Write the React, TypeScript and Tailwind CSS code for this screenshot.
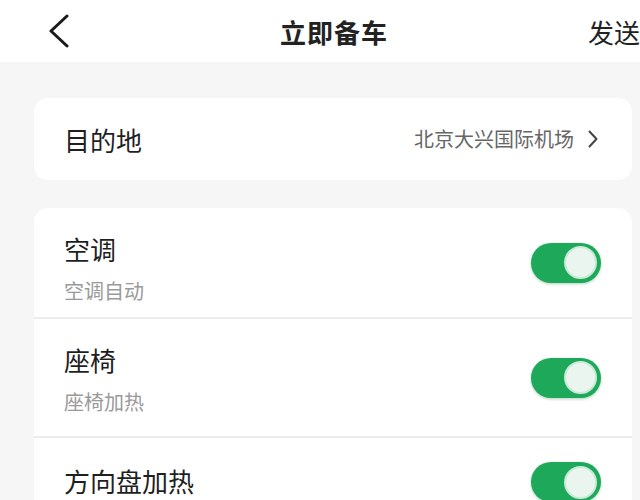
import React from 'react';

interface ToggleRowProps {
  title: string;
  subtitle?: string;
  heightClass: string;
  divider?: boolean;
}

const Toggle: React.FC = () => (
  <div className="self-center w-[70px] h-[40px] rounded-full bg-[#1ea95a] shadow-[0_1px_3px_rgba(20,120,60,0.35)] flex items-center justify-end pr-[4px]">
    <div className="w-[33px] h-[33px] rounded-full bg-[#e9f5ee] border-2 border-[#c9ead6]" />
  </div>
);

const ToggleRow: React.FC<ToggleRowProps> = ({ title, subtitle, heightClass, divider }) => (
  <div className={`${heightClass} flex items-start justify-between pl-[30px] pr-[31px] ${divider ? 'border-b-2 border-[#ececec]' : ''}`}>
    <div className={`flex flex-col ${subtitle ? 'pt-[24px]' : 'pt-[26px]'}`}>
      <span className="text-[26px] leading-[34px] text-[#1f1f1f]">{title}</span>
      {subtitle && <span className="text-[20px] leading-[28px] mt-[11px] text-[#9a9a9a]">{subtitle}</span>}
    </div>
    <Toggle />
  </div>
);

export default function App() {
  return (
    <div
      className="w-[640px] h-[500px] overflow-hidden bg-[#f6f6f6]"
      style={{ fontFamily: '"Noto Sans CJK SC", "Noto Sans", sans-serif' }}
    >
      {/* Header */}
      <div className="h-[62px] bg-white flex items-center">
        <div className="w-[80px] pl-[48px] flex items-center">
          <svg width="22" height="34" viewBox="0 0 22 34" fill="none">
            <path d="M19 2 L3 17 L19 32" stroke="#1a1a1a" strokeWidth="3" strokeLinecap="round" strokeLinejoin="round" />
          </svg>
        </div>
        <div className="flex-1 text-center text-[26px] font-bold text-[#222] tracking-[1px]">立即备车</div>
        <div className="w-[52px] text-[26px] text-[#222] whitespace-nowrap">发送</div>
      </div>

      <div className="pl-[34px] pr-[8px] pt-[36px] flex flex-col">
        {/* Destination */}
        <div className="h-[82px] bg-white rounded-[14px] flex items-center justify-between pl-[30px] pr-[34px]">
          <span className="text-[26px] text-[#1f1f1f]">目的地</span>
          <div className="flex items-center gap-[14px]">
            <span className="text-[20px] text-[#666]">北京大兴国际机场</span>
            <svg width="10" height="18" viewBox="0 0 10 18" fill="none">
              <path d="M1.5 1.5 L8.5 9 L1.5 16.5" stroke="#444" strokeWidth="2" strokeLinecap="round" strokeLinejoin="round" />
            </svg>
          </div>
        </div>

        {/* Settings */}
        <div className="mt-[28px] bg-white rounded-t-[14px] flex flex-col">
          <ToggleRow title="空调" subtitle="空调自动" heightClass="h-[111px]" divider />
          <ToggleRow title="座椅" subtitle="座椅加热" heightClass="h-[119px]" divider />
          <ToggleRow title="方向盘加热" heightClass="h-[88px]" />
        </div>
      </div>
    </div>
  );
}
